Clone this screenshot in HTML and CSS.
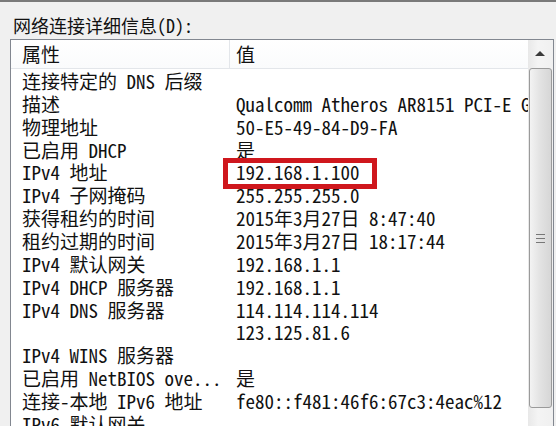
FILE: index.html
```html
<html>
	<head>
		<title>网络连接详细信息</title>
		<meta charset="utf-8">
		<link rel="stylesheet" href="styles.css">
	</head>
	<body>
		<div class="caption">网络连接详细信息(D):</div>

		<div class="listbox">
			<div class="list">
				<div class="row head">
					<div>属性</div>
					<div>值</div>
				</div>
				<div class="row"><div>连接特定的 DNS 后缀</div><div></div></div>
				<div class="row"><div>描述</div><div>Qualcomm Atheros AR8151 PCI-E Gigabit Ethernet Controller (NDIS 6.20)</div></div>
				<div class="row"><div>物理地址</div><div>50-E5-49-84-D9-FA</div></div>
				<div class="row"><div>已启用 DHCP</div><div>是</div></div>
				<div class="row"><div>IPv4 地址</div><div><span class="mark">192.168.1.100</span></div></div>
				<div class="row"><div>IPv4 子网掩码</div><div>255.255.255.0</div></div>
				<div class="row"><div>获得租约的时间</div><div>2015年3月27日 8:47:40</div></div>
				<div class="row"><div>租约过期的时间</div><div>2015年3月27日 18:17:44</div></div>
				<div class="row"><div>IPv4 默认网关</div><div>192.168.1.1</div></div>
				<div class="row"><div>IPv4 DHCP 服务器</div><div>192.168.1.1</div></div>
				<div class="row"><div>IPv4 DNS 服务器</div><div>114.114.114.114</div></div>
				<div class="row"><div></div><div>123.125.81.6</div></div>
				<div class="row"><div>IPv4 WINS 服务器</div><div></div></div>
				<div class="row"><div>已启用 NetBIOS ove...</div><div>是</div></div>
				<div class="row"><div>连接-本地 IPv6 地址</div><div>fe80::f481:46f6:67c3:4eac%12</div></div>
				<div class="row"><div>IPv6 默认网关</div><div></div></div>
			</div>

			<div class="scrollbar">
				<div class="arrow"></div>
				<div class="thumb">
					<span class="grip"></span>
				</div>
			</div>
		</div>
	</body>
</html>
```

FILE: styles.css
```css
body {
	margin: 0;
	height: 100vh;
	overflow: hidden;
	box-sizing: border-box;
	background: #f0f0f0;
	border-top: 2px solid #7a7a7a;
	font-family: "Noto Sans Mono CJK SC", "Liberation Mono", "Noto Sans CJK SC", monospace;
	font-size: 19px;
	color: #111;
}

.caption {
	margin: 13px 0 0 13px;
	height: 20px;
	line-height: 20px;
	font-size: 18px;
}

.listbox {
	display: flex;
	margin: 4px 0 0 10px;
	width: 544px;
	height: 400px;
	box-sizing: border-box;
	overflow: hidden;
	border: 1px solid #828790;
	border-bottom: none;
	background: #fff;
}

.list {
	flex: none;
	width: 517px;
	overflow: hidden;
}

.row {
	display: grid;
	grid-template-columns: 219px 298px;
	line-height: 22.86px;
	white-space: nowrap;
}

.row > div {
	padding-left: 11px;
}

.row > div + div {
	padding-left: 6px;
}

.head {
	height: 28px;
	line-height: 28px;
	border-bottom: 1px solid #e3e6ea;
	margin-bottom: 1px;
	background: linear-gradient(#fff, #fafbfc);
}

.head > div:first-child {
	border-right: 1px solid #e3e6ea;
}

.mark {
	position: relative;
	display: inline-block;
	vertical-align: top;
}

.mark::after {
	content: "";
	position: absolute;
	top: -3px;
	bottom: -5px;
	left: -13px;
	right: -17px;
	border: 5px solid #cf171d;
}

.scrollbar {
	position: relative;
	flex: none;
	width: 25px;
	display: flex;
	flex-direction: column;
	background: linear-gradient(to right, #e8e8e8, #f4f4f4 40%, #f0f0f0);
}

.arrow {
	height: 28px;
	position: relative;
}

.arrow::after {
	content: "";
	position: absolute;
	left: 7px;
	top: 11px;
	border: 5px solid transparent;
	border-top: none;
	border-bottom: 5px solid #3a3a3a;
}

.thumb {
	display: flex;
	align-items: center;
	justify-content: center;
	height: 338px;
	margin: 0 1px;
	border: 1px solid #9a9a9a;
	border-radius: 3px;
	background: linear-gradient(to right, #f3f3f3, #e2e2e2 50%, #d6d6d6);
}

.grip {
	width: 9px;
	height: 7px;
	border-top: 1px solid #777;
	border-bottom: 1px solid #777;
	background: linear-gradient(#777, #777) center / 100% 1px no-repeat;
}
```
